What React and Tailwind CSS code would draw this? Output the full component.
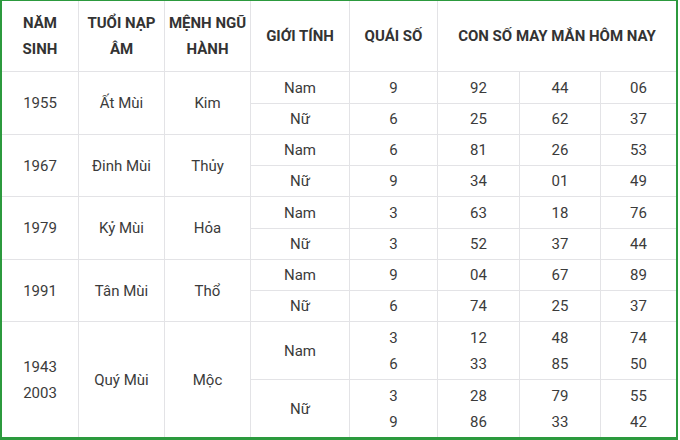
import React from "react";

const rows = [
  { year: ["1955"], tuoi: "Ất Mùi", menh: "Kim", sub: [
    { g: "Nam", q: ["9"], n: [["92"], ["44"], ["06"]], h: "h-[31px]" },
    { g: "Nữ", q: ["6"], n: [["25"], ["62"], ["37"]], h: "h-[30px]" },
  ]},
  { year: ["1967"], tuoi: "Đinh Mùi", menh: "Thủy", sub: [
    { g: "Nam", q: ["6"], n: [["81"], ["26"], ["53"]], h: "h-[30px]" },
    { g: "Nữ", q: ["9"], n: [["34"], ["01"], ["49"]], h: "h-[30px]" },
  ]},
  { year: ["1979"], tuoi: "Kỷ Mùi", menh: "Hỏa", sub: [
    { g: "Nam", q: ["3"], n: [["63"], ["18"], ["76"]], h: "h-[31px]" },
    { g: "Nữ", q: ["3"], n: [["52"], ["37"], ["44"]], h: "h-[30px]" },
  ]},
  { year: ["1991"], tuoi: "Tân Mùi", menh: "Thổ", sub: [
    { g: "Nam", q: ["9"], n: [["04"], ["67"], ["89"]], h: "h-[30px]" },
    { g: "Nữ", q: ["6"], n: [["74"], ["25"], ["37"]], h: "h-[30px]" },
  ]},
  { year: ["1943", "2003"], tuoi: "Quý Mùi", menh: "Mộc", sub: [
    { g: "Nam", q: ["3", "6"], n: [["12", "33"], ["48", "85"], ["74", "50"]], h: "h-[57px]" },
    { g: "Nữ", q: ["3", "9"], n: [["28", "86"], ["79", "33"], ["55", "42"]], h: "h-[57px]" },
  ]},
];

function Cell({ children, className = "" }) {
  return (
    <div className={"bg-white flex flex-col items-center justify-center text-center leading-[26px] " + className}>
      {children}
    </div>
  );
}

function Lines({ items }) {
  return items.map((t, i) => <span key={i}>{t}</span>);
}

export default function App() {
  const cells = [];
  let rowStart = 2;
  rows.forEach((r, ri) => {
    const span = "row-span-2";
    cells.push(
      <Cell key={`y${ri}`} className={span} style={{}}>
        <Lines items={r.year} />
      </Cell>
    );
    cells.push(
      <Cell key={`t${ri}`} className={span}>{r.tuoi}</Cell>
    );
    cells.push(
      <Cell key={`m${ri}`} className={span}>{r.menh}</Cell>
    );
    r.sub.forEach((s, si) => {
      if (si === 1) {
      }
      cells.push(<Cell key={`g${ri}${si}`} className={"col-start-4 " + s.h}>{s.g}</Cell>);
      cells.push(<Cell key={`q${ri}${si}`} className={s.h}><Lines items={s.q} /></Cell>);
      s.n.forEach((n, ni) => {
        cells.push(<Cell key={`n${ri}${si}${ni}`} className={s.h}><Lines items={n} /></Cell>);
      });
    });
    rowStart += 2;
  });

  return (
    <div className="w-[680px] h-[440px] bg-white">
      <div
        className="w-[678px] h-[440px] border-t border-l-2 border-r-2 border-b-[3px] border-[#2c9a3e] bg-[#e3e3e6] text-[15px] text-[#3b3b3b]"
        style={{ fontFamily: "Roboto, 'Liberation Sans', Arial, sans-serif" }}
      >
        <div className="grid grid-cols-[76px_85px_85px_98px_87px_81px_80px_75px] gap-px">
          <Cell className="h-[70px] font-bold text-[#333]"><span>NĂM</span><span>SINH</span></Cell>
          <Cell className="h-[70px] font-bold text-[#333]"><span>TUỔI NẠP</span><span>ÂM</span></Cell>
          <Cell className="h-[70px] font-bold text-[#333]"><span>MỆNH NGŨ</span><span>HÀNH</span></Cell>
          <Cell className="h-[70px] font-bold text-[#333]">GIỚI TÍNH</Cell>
          <Cell className="h-[70px] font-bold text-[#333]">QUÁI SỐ</Cell>
          <Cell className="h-[70px] col-span-3 font-bold text-[#333]">CON SỐ MAY MẮN HÔM NAY</Cell>
          {cells}
        </div>
      </div>
    </div>
  );
}
